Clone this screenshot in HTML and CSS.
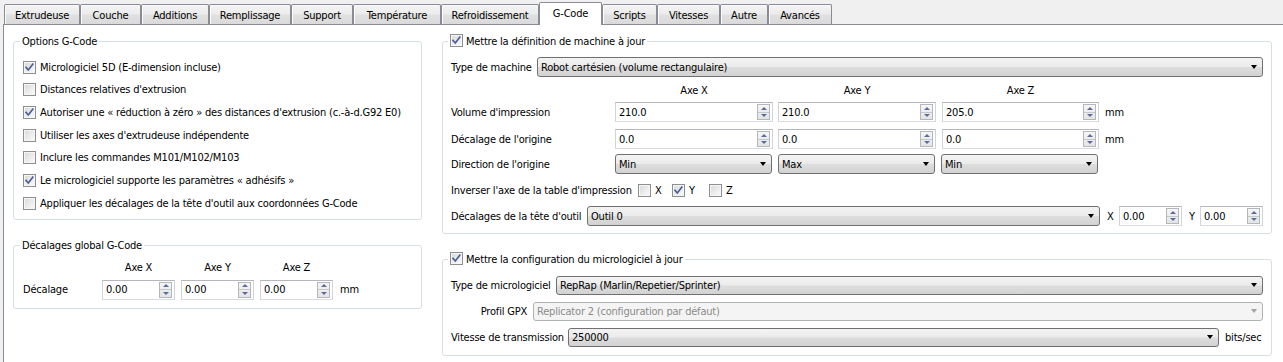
FILE: index.html
```html
<!DOCTYPE html>
<html lang="fr">
<head>
<meta charset="utf-8">
<title>G-Code</title>
<link rel="stylesheet" href="styles.css">
</head>
<body>
<div class="tabwidget">
  <div class="tabbar">
    <div class="tab">Extrudeuse</div>
    <div class="tab">Couche</div>
    <div class="tab">Additions</div>
    <div class="tab">Remplissage</div>
    <div class="tab">Support</div>
    <div class="tab">Température</div>
    <div class="tab">Refroidissement</div>
    <div class="tab active">G-Code</div>
    <div class="tab">Scripts</div>
    <div class="tab">Vitesses</div>
    <div class="tab">Autre</div>
    <div class="tab">Avancés</div>
  </div>
  <div class="pane">
    <div class="col col-left">
      <fieldset class="group g-opts">
        <legend>Options G-Code</legend>
        <div class="cbrow"><span class="cb on"><svg viewBox="0 0 11 11"><path d="M2 5.4 L4.3 8 L8.8 2.2"/></svg></span>Micrologiciel 5D (E-dimension incluse)</div>
        <div class="cbrow"><span class="cb"></span>Distances relatives d'extrusion</div>
        <div class="cbrow"><span class="cb on"><svg viewBox="0 0 11 11"><path d="M2 5.4 L4.3 8 L8.8 2.2"/></svg></span>Autoriser une « réduction à zéro » des distances d'extrusion (c.-à-d.G92 E0)</div>
        <div class="cbrow"><span class="cb"></span>Utiliser les axes d'extrudeuse indépendente</div>
        <div class="cbrow"><span class="cb"></span>Inclure les commandes M101/M102/M103</div>
        <div class="cbrow"><span class="cb on"><svg viewBox="0 0 11 11"><path d="M2 5.4 L4.3 8 L8.8 2.2"/></svg></span>Le micrologiciel supporte les paramètres « adhésifs »</div>
        <div class="cbrow"><span class="cb"></span>Appliquer les décalages de la tête d'outil aux coordonnées G-Code</div>
      </fieldset>
      <fieldset class="group g-offs">
        <legend>Décalages global G-Code</legend>
        <div class="offhead">
          <span class="offlabel"></span>
          <span class="offcol">Axe X</span>
          <span class="offcol">Axe Y</span>
          <span class="offcol">Axe Z</span>
        </div>
        <div class="offrow">
          <span class="offlabel">Décalage</span>
          <div class="spin offcol"><span class="v">0.00</span><span class="btns"><i class="up"></i><i class="dn"></i></span></div>
          <div class="spin offcol"><span class="v">0.00</span><span class="btns"><i class="up"></i><i class="dn"></i></span></div>
          <div class="spin offcol"><span class="v">0.00</span><span class="btns"><i class="up"></i><i class="dn"></i></span></div>
          <span class="unit">mm</span>
        </div>
      </fieldset>
    </div>
    <div class="col col-right">
      <fieldset class="group g-machine">
        <legend><span class="cb on"><svg viewBox="0 0 11 11"><path d="M2 5.4 L4.3 8 L8.8 2.2"/></svg></span>Mettre la définition de machine à jour</legend>
        <div class="frow r-type">
          <span class="lbl w-type">Type de machine</span>
          <div class="combo grow"><span class="ct">Robot cartésien (volume rectangulaire)</span><i class="arr"></i></div>
        </div>
        <div class="frow r-head">
          <span class="lbl w-axis"></span>
          <span class="axc c1">Axe X</span>
          <span class="axc c2">Axe Y</span>
          <span class="axc c3">Axe Z</span>
        </div>
        <div class="frow r-vol">
          <span class="lbl w-axis">Volume d'impression</span>
          <div class="spin axc c1"><span class="v">210.0</span><span class="btns"><i class="up"></i><i class="dn"></i></span></div>
          <div class="spin axc c2"><span class="v">210.0</span><span class="btns"><i class="up"></i><i class="dn"></i></span></div>
          <div class="spin axc c3"><span class="v">205.0</span><span class="btns"><i class="up"></i><i class="dn"></i></span></div>
          <span class="unit">mm</span>
        </div>
        <div class="frow r-org">
          <span class="lbl w-axis">Décalage de l'origine</span>
          <div class="spin axc c1"><span class="v">0.0</span><span class="btns"><i class="up"></i><i class="dn"></i></span></div>
          <div class="spin axc c2"><span class="v">0.0</span><span class="btns"><i class="up"></i><i class="dn"></i></span></div>
          <div class="spin axc c3"><span class="v">0.0</span><span class="btns"><i class="up"></i><i class="dn"></i></span></div>
          <span class="unit">mm</span>
        </div>
        <div class="frow r-dir">
          <span class="lbl w-axis">Direction de l'origine</span>
          <div class="combo axc c1 cw"><span class="ct">Min</span><i class="arr"></i></div>
          <div class="combo axc c2 cw"><span class="ct">Max</span><i class="arr"></i></div>
          <div class="combo axc c3 cw"><span class="ct">Min</span><i class="arr"></i></div>
        </div>
        <div class="frow r-inv">
          <span class="lbl w-inv">Inverser l'axe de la table d'impression</span>
          <span class="inv ix"><span class="cb"></span>X</span>
          <span class="inv iy"><span class="cb on"><svg viewBox="0 0 11 11"><path d="M2 5.4 L4.3 8 L8.8 2.2"/></svg></span>Y</span>
          <span class="inv iz"><span class="cb"></span>Z</span>
        </div>
        <div class="frow r-tool">
          <span class="lbl w-tool">Décalages de la tête d'outil</span>
          <div class="combo grow"><span class="ct">Outil 0</span><i class="arr"></i></div>
          <span class="xy xl">X</span>
          <div class="spin sm"><span class="v">0.00</span><span class="btns"><i class="up"></i><i class="dn"></i></span></div>
          <span class="xy yl">Y</span>
          <div class="spin sm"><span class="v">0.00</span><span class="btns"><i class="up"></i><i class="dn"></i></span></div>
        </div>
      </fieldset>
      <fieldset class="group g-fw">
        <legend><span class="cb on"><svg viewBox="0 0 11 11"><path d="M2 5.4 L4.3 8 L8.8 2.2"/></svg></span>Mettre la configuration du micrologiciel à jour</legend>
        <div class="frow r-fwtype">
          <span class="lbl w-fw">Type de micrologiciel</span>
          <div class="combo grow"><span class="ct">RepRap (Marlin/Repetier/Sprinter)</span><i class="arr"></i></div>
        </div>
        <div class="frow r-gpx">
          <span class="lbl w-gpx">Profil GPX</span>
          <div class="combo grow disabled"><span class="ct">Replicator 2 (configuration par défaut)</span><i class="arr"></i></div>
        </div>
        <div class="frow r-baud">
          <span class="lbl w-baud">Vitesse de transmission</span>
          <div class="combo baud"><span class="ct">250000</span><i class="arr"></i></div>
          <span class="unit">bits/sec</span>
        </div>
      </fieldset>
    </div>
  </div>
</div>
</body>
</html>
```

FILE: styles.css
```css
html, body {
  margin: 0;
  padding: 0;
  background: #f0f0f0;
}
body {
  width: 1283px;
  height: 362px;
  overflow: hidden;
  font-family: "DejaVu Sans Condensed", "DejaVu Sans", sans-serif;
  font-stretch: condensed;
  font-size: 11px;
  letter-spacing: -0.2px;
  color: #000;
}

/* ---------- tabs ---------- */
.tabbar {
  display: flex;
  align-items: flex-end;
  height: 24px;
  padding-left: 4px;
}
.tab {
  box-sizing: border-box;
  height: 20px;
  padding-top: 1px;
  border: 1px solid #898c95;
  border-bottom: none;
  border-radius: 2px 2px 0 0;
  background: linear-gradient(#f4f4f4 0%, #ececec 45%, #e0e0e0 55%, #dadada 100%);
  box-shadow: inset 1px 1px 0 #fbfbfb;
  display: flex;
  align-items: center;
  justify-content: center;
  white-space: nowrap;
}
.tab:nth-child(1) { width: 76px; }
.tab:nth-child(2) { width: 61px; }
.tab:nth-child(3) { width: 68px; }
.tab:nth-child(4) { width: 82px; }
.tab:nth-child(5) { width: 62px; }
.tab:nth-child(6) { width: 88px; }
.tab:nth-child(7) { width: 98px; }
.tab:nth-child(8) { width: 63px; }
.tab:nth-child(9) { width: 55px; }
.tab:nth-child(10) { width: 63px; }
.tab:nth-child(11) { width: 48px; }
.tab:nth-child(12) { width: 64px; }
.tab.active {
  height: 23px;
  padding-top: 0;
  padding-bottom: 1px;
  margin-bottom: -1px;
  background: #fff;
  box-shadow: none;
  position: relative;
  z-index: 1;
}

/* ---------- pane ---------- */
.pane {
  margin-left: 3px;
  height: 328px;
  border: 1px solid #898c95;
  border-right: none;
  border-bottom: none;
  background: #fff;
  padding: 9px 8px 0 9px;
  display: flex;
  gap: 20px;
}
.col {
  display: flex;
  flex-direction: column;
  align-items: stretch;
  gap: 18px;
  flex: none;
}
.col-left { width: 409px; }
.col-right { width: 830px; }

/* ---------- group boxes ---------- */
.group {
  margin: 0;
  min-width: 0;
  box-sizing: border-box;
  border: 1px solid #d5dfe5;
  border-radius: 3px;
}
.group legend {
  padding: 0 2px;
  margin-left: -3px;
  height: 15px;
  line-height: 15px;
  white-space: nowrap;
}
.group legend .cb {
  display: inline-block;
  vertical-align: -2px;
  margin-right: 3px;
}
.g-opts { padding: 7px 9px 4px 9px; }
.g-offs { padding: 7px 9px 8px 9px; }
.g-machine { padding: 8px 8px 7px 8px; }
.g-fw { padding: 9px 8px 8px 8px; }

/* ---------- checkbox ---------- */
.cb {
  box-sizing: border-box;
  width: 13px;
  height: 13px;
  flex: none;
  border: 1px solid #8e8f8f;
  background: linear-gradient(135deg, #d6d8db 0%, #eeeeee 60%, #fafafa 100%);
  box-shadow: inset 0 0 0 1px #f6f6f6;
}
.cb svg {
  display: block;
  width: 11px;
  height: 11px;
}
.cb svg path {
  fill: none;
  stroke: #4d5f96;
  stroke-width: 1.7;
  stroke-linecap: square;
}
.cbrow {
  height: 22.67px;
  display: flex;
  align-items: center;
  white-space: nowrap;
}
.cbrow .cb { margin-right: 4px; }

/* ---------- spin box ---------- */
.spin {
  box-sizing: border-box;
  height: 20px;
  border: 1px solid;
  border-color: #b3b6bb #d0d3d8 #d8dce1 #d0d3d8;
  background: #fff;
  display: flex;
  align-items: center;
  padding-left: 3px;
}
.spin .v { flex: 1; }
.btns {
  box-sizing: border-box;
  width: 13px;
  height: 16px;
  margin-right: 2px;
  border: 1px solid #b4b7bc;
  background: linear-gradient(#f6f6f6, #e4e4e4);
  display: flex;
  flex-direction: column;
}
.btns i {
  flex: 1;
  display: flex;
  align-items: center;
  justify-content: center;
}
.btns i.up { border-bottom: 1px solid #c4c7cc; }
.btns i.up::before {
  content: "";
  border-left: 3px solid transparent;
  border-right: 3px solid transparent;
  border-bottom: 3px solid #5a6d99;
}
.btns i.dn::before {
  content: "";
  border-left: 3px solid transparent;
  border-right: 3px solid transparent;
  border-top: 3px solid #5a6d99;
}

/* ---------- combo box ---------- */
.combo {
  box-sizing: border-box;
  height: 20px;
  border: 1px solid #707070;
  border-radius: 3px;
  background: linear-gradient(#f3f3f3 0%, #ebebeb 48%, #dddddd 52%, #d2d2d2 100%);
  display: flex;
  align-items: center;
  padding: 0 5px 0 3px;
  white-space: nowrap;
  min-width: 0;
}
.combo .ct { flex: 1; overflow: hidden; }
.combo .arr {
  width: 0;
  height: 0;
  border-left: 3px solid transparent;
  border-right: 3px solid transparent;
  border-top: 4px solid #000;
  margin-top: -1px;
}
.combo.disabled {
  border-color: #adb2b5;
  background: #f4f4f4;
  color: #8b8b8b;
}
.combo.disabled .arr { border-top-color: #a3a3a3; }
.grow { flex: 1; }

/* ---------- left offsets ---------- */
.offhead, .offrow {
  display: flex;
  align-items: center;
}
.offhead { height: 16px; }
.offrow { height: 20px; margin-top: 4px; }
.offlabel { width: 79px; flex: none; }
.offcol { width: 73px; flex: none; text-align: center; }
.offcol + .offcol { margin-left: 6px; }
.offrow .offcol { text-align: left; }
.unit { margin-left: 6px; white-space: nowrap; }
.offrow .unit { margin-left: 7px; }

/* ---------- right form rows ---------- */
.frow {
  display: flex;
  align-items: center;
  height: 20px;
}
.lbl { flex: none; white-space: nowrap; }
.w-type { width: 86px; }
.w-axis { width: 164px; }
.w-inv { width: 187px; }
.w-tool { width: 136px; }
.w-fw { width: 105px; }
.w-gpx { width: 82px; text-align: right; padding-right: 6px; box-sizing: border-box; }
.w-baud { width: 117px; }

.r-head { height: 16px; margin-top: 5px; }
.r-vol { margin-top: 4px; }
.r-org { margin-top: 7px; }
.r-dir { margin-top: 5px; }
.r-inv { margin-top: 6px; }
.r-tool { margin-top: 6px; }

.axc { flex: none; text-align: center; }
.c1 { width: 158px; }
.c2 { width: 158px; margin-left: 5px; }
.c3 { width: 157px; margin-left: 6px; }
.spin.axc, .combo.axc { text-align: left; }
.combo.cw.c1, .combo.cw.c2, .combo.cw.c3 { width: 157px; }
.combo.cw.c2 { margin-left: 6px; }
.r-vol .unit, .r-org .unit { margin-left: 6px; }

.inv {
  display: flex;
  align-items: center;
  flex: none;
}
.inv .cb { margin-right: 4px; }
.ix { width: 34px; }
.iy { width: 37px; }

.xy { flex: none; }
.xl { width: 12px; margin-left: 7px; }
.yl { width: 11px; margin-left: 7px; }
.spin.sm { width: 63px; flex: none; }

.r-fwtype, .r-gpx, .r-baud { height: 19px; }
.r-gpx, .r-baud { margin-top: 7px; }
.combo.baud { width: 651px; flex: none; height: 19px; }
.r-fwtype .combo, .r-gpx .combo { height: 19px; }
```
